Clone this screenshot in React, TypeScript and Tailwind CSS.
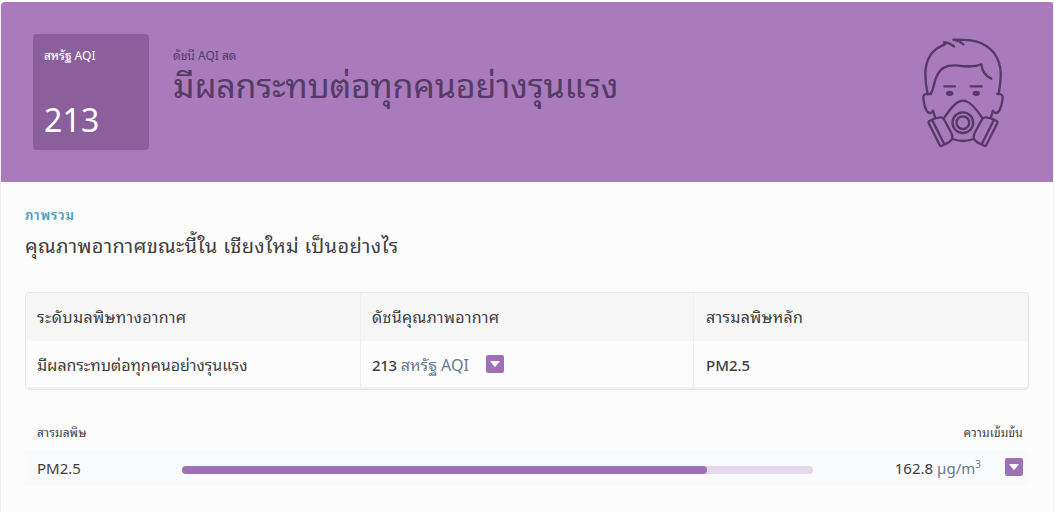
import type { ReactNode } from 'react';

const pollutants = [{ name: 'PM2.5', value: '162.8', unit: 'µg/m', level: 83.2 }];

function MaskFace() {
  return (
    <svg
      width="83"
      height="112"
      viewBox="66 51 249 336"
      fill="none"
      stroke="#543b66"
      strokeWidth="7"
      strokeLinecap="round"
      strokeLinejoin="round"
    >
      {/* hair and head */}
      <path d="M162 79 L149 71 L132 66 L135 73 C94 88 77 122 76 160 C76 184 79 205 83 222" />
      <path d="M190 73 L178 64 L160 59 C207 57 252 61 283 100 C311 139 302 184 296 222" />
      <path d="M83 222 H92 C99 211 101 195 107 176 C120 142 139 135 167 136 C195 139 220 143 244 133 C246 151 257 168 274 176" />
      {/* ears */}
      <path d="M85 222 C73 221 69 226 70 235 C72 252 75 268 84 277 C90 281 96 279 99 272 L105 291" />
      <path d="M292 222 C304 221 309 225 308 235 C306 252 302 268 294 277 C288 281 282 279 279 272 L273 291" />
      {/* brows and eyes */}
      <path d="M133 199 H165 M212 199 H245" />
      <ellipse cx="149" cy="220" rx="11" ry="8" fill="#543b66" stroke="none" />
      <ellipse cx="229" cy="220" rx="11" ry="8" fill="#543b66" stroke="none" />
      {/* respirator */}
      <path d="M133 293 C149 268 166 247 182 243 Q189 241 197 243 C213 248 230 268 246 293 M158 357 Q189 369 220 357" />
      <circle cx="188.500" cy="308" r="31" />
      <circle cx="188.500" cy="308" r="19" />
      <path d="M86 309 Q84 306 88 303 L105 295 L121 292 Q128 291 133 300 L154 339 Q159 350 155 359 L146 367 L124 378 Q121 379 119 375 Z M98 303 L132 371" />
      <path d="M292 309 Q294 306 290 303 L273 295 L257 292 Q250 291 245 300 L224 339 Q219 350 223 359 L232 367 L254 378 Q257 379 259 375 Z M280 303 L246 371" />
    </svg>
  );
}

function DropdownButton() {
  return (
    <button className="flex size-[18px] shrink-0 items-center justify-center rounded-[2px] bg-[#a070b6]">
      <svg width="10" height="6" viewBox="0 0 10 6" fill="#fff">
        <path d="M.8 0h8.400q.8 0 .3.700L5.600 5.600q-.6.600-1.200 0L.5.700Q0 0 .8 0z" />
      </svg>
    </button>
  );
}

function Cell({ children, last }: { children: ReactNode; last?: boolean }) {
  return (
    <div className={last ? 'flex items-center pl-3' : 'flex items-center border-r border-[#eeeff0] pl-[11px]'}>
      {children}
    </div>
  );
}

export default function App() {
  return (
    <div className="h-[512px] overflow-hidden border-x border-[#f0f0f0] bg-[#fcfcfc] pt-0.5 font-['Noto_Sans','Noto_Sans_Thai_Looped',Loma,Waree,Garuda,'Noto_Sans_Thai',sans-serif] whitespace-nowrap text-[#3f3f3f]">
      <header className="-mr-px flex h-[180px] items-start rounded-t bg-[#a97abc] pl-8 text-[#543b66]">
        <div className="mt-8 flex size-[116px] flex-col justify-between rounded bg-[#8b5e9c] px-[11px] text-white">
          <p className="mt-3.5 text-xs leading-4">
            <span className="font-medium">สหรัฐ</span> AQI
          </p>
          <p className="mb-2.5 text-[32px] leading-10 tracking-[0.2px]">213</p>
        </div>
        <div className="mt-[46px] ml-6">
          <p className="text-xs leading-4">ดัชนี AQI สด</p>
          <h1 className="-mt-[3px] text-[34px] leading-[48px] tracking-[-0.2px]">มีผลกระทบต่อทุกคนอย่างรุนแรง</h1>
        </div>
        <div className="mt-[35px] mr-[49px] ml-auto">
          <MaskFace />
        </div>
      </header>

      <main className="pr-6 pl-6">
        <p className="pt-6 text-[13px] leading-[18px] font-semibold tracking-[0.9px] text-[#4c9dbd]">ภาพรวม</p>
        <h2 className="mt-2 text-[20px] leading-7 tracking-[0.35px]">คุณภาพอากาศขณะนี้ใน เชียงใหม่ เป็นอย่างไร</h2>

        <section className="mt-8 overflow-hidden rounded border border-[#e5e6e8] text-[15px]">
          <div className="grid h-12 grid-cols-[335px_333px_1fr] bg-[#f6f6f6] text-base">
            <Cell>
              <span className="tracking-[0.35px]">ระดับมลพิษทางอากาศ</span>
            </Cell>
            <Cell>
              <span className="tracking-[0.27px]">ดัชนีคุณภาพอากาศ</span>
            </Cell>
            <Cell last>
              <span className="tracking-[0.25px]">สารมลพิษหลัก</span>
            </Cell>
          </div>
          <div className="grid h-12 grid-cols-[335px_333px_1fr] border-b-2 border-[#ebf0f4]">
            <Cell>
              <span className="pt-0.5 text-base tracking-[-0.05px]">มีผลกระทบต่อทุกคนอย่างรุนแรง</span>
            </Cell>
            <Cell>
              <span className="pt-0.5 font-medium tracking-[-0.3px]">213</span>
              <span className="mr-[17px] ml-1 pt-0.5 text-base text-[#69798e]">สหรัฐ AQI</span>
              <DropdownButton />
            </Cell>
            <Cell last>
              <span className="pt-0.5 font-medium">PM2.5</span>
            </Cell>
          </div>
        </section>

        <section className="mt-[34px]">
          <div className="flex justify-between pr-1.5 pl-3 text-xs leading-[18px]">
            <span className="tracking-[0.1px]">สารมลพิษ</span>
            <span className="tracking-[0.15px]">ความเข้มข้น</span>
          </div>
          {pollutants.map((p) => (
            <div key={p.name} className="mt-2 flex h-9 items-center bg-[#f9fafc] pr-1.5 pl-3 text-[15px]">
              <span className="w-[145px]">{p.name}</span>
              <div className="mt-1 h-2 w-[631px] rounded-full bg-[#e3d8e9]">
                <div className="h-full rounded-full bg-[#a070b6]" style={{ width: `${p.level}%` }} />
              </div>
              <span className="ml-auto">{p.value}</span>
              <span className="mr-6 ml-1 text-[#69798e]">
                {p.unit}
                <sup className="-top-[6px] text-[10px]">3</sup>
              </span>
              <div className="-mt-0.5 flex">
                <DropdownButton />
              </div>
            </div>
          ))}
        </section>
      </main>
    </div>
  );
}
